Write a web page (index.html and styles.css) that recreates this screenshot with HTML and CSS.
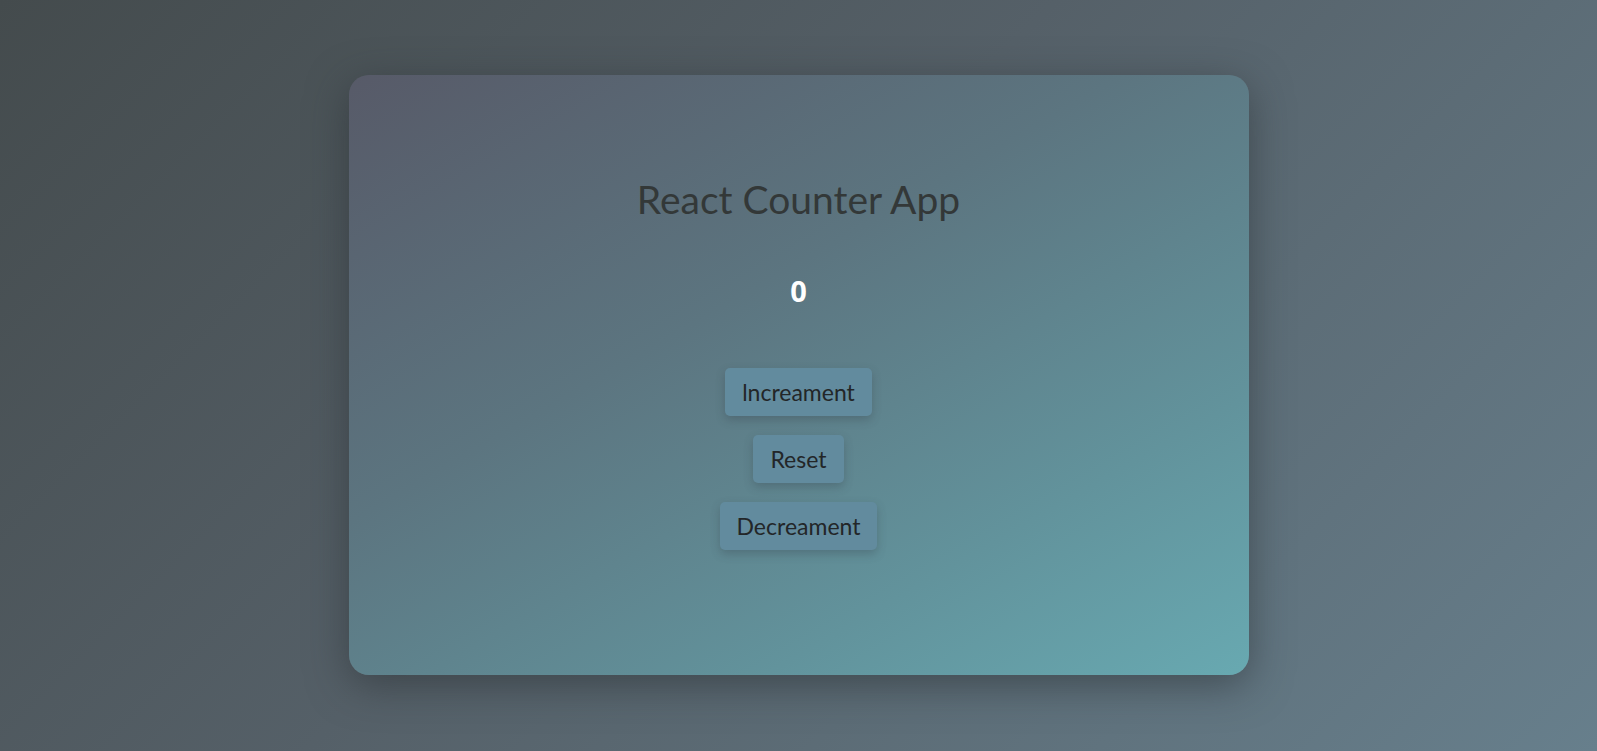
FILE: index.html
```html
<!DOCTYPE html>
<html lang="en">
<head>
<meta charset="utf-8">
<title>React Counter App</title>
<link rel="stylesheet" href="styles.css">
</head>
<body>
<main class="page">
  <section class="card">
    <h1 class="title">React Counter App</h1>
    <div class="count">0</div>
    <div class="actions">
      <button class="btn">lncreament</button>
      <button class="btn">Reset</button>
      <button class="btn">Decreament</button>
    </div>
  </section>
</main>
</body>
</html>
```
FILE: styles.css
```css
html, body {
  margin: 0;
  padding: 0;
  height: 100%;
}
body {
  background: linear-gradient(135deg, #444b4d 0%, #556068 45%, #677f8c 100%);
  font-family: Lato, "Noto Sans", sans-serif;
}
.page {
  height: 100%;
  display: flex;
  align-items: center;
  justify-content: center;
  padding-bottom: 2px;
  box-sizing: border-box;
}
.card {
  width: 900px;
  height: 600px;
  box-sizing: border-box;
  border-radius: 20px;
  background: linear-gradient(150deg, #575a68 0%, #5c7580 40%, #62939c 75%, #68a9b1 100%);
  box-shadow: 0 10px 40px rgba(40, 45, 50, 0.55);
  display: flex;
  flex-direction: column;
  align-items: center;
  padding-top: 101px;
}
.title {
  margin: 0;
  font-size: 39px;
  line-height: 46px;
  font-weight: 400;
  color: #333838;
}
.count {
  margin-top: 51px;
  font-family: "Open Sans", sans-serif;
  font-weight: 700;
  font-size: 29px;
  line-height: 35px;
  color: #ffffff;
}
.actions {
  margin-top: 60px;
  display: flex;
  flex-direction: column;
  align-items: center;
  gap: 19px;
}
.btn {
  height: 48px;
  padding: 0 17px;
  border: none;
  border-radius: 5px;
  background: #628b9e;
  color: #232628;
  font-family: Lato, "Noto Sans", sans-serif;
  font-size: 23px;
  box-shadow: 0 4px 10px rgba(50, 60, 70, 0.3);
  cursor: pointer;
}
```
